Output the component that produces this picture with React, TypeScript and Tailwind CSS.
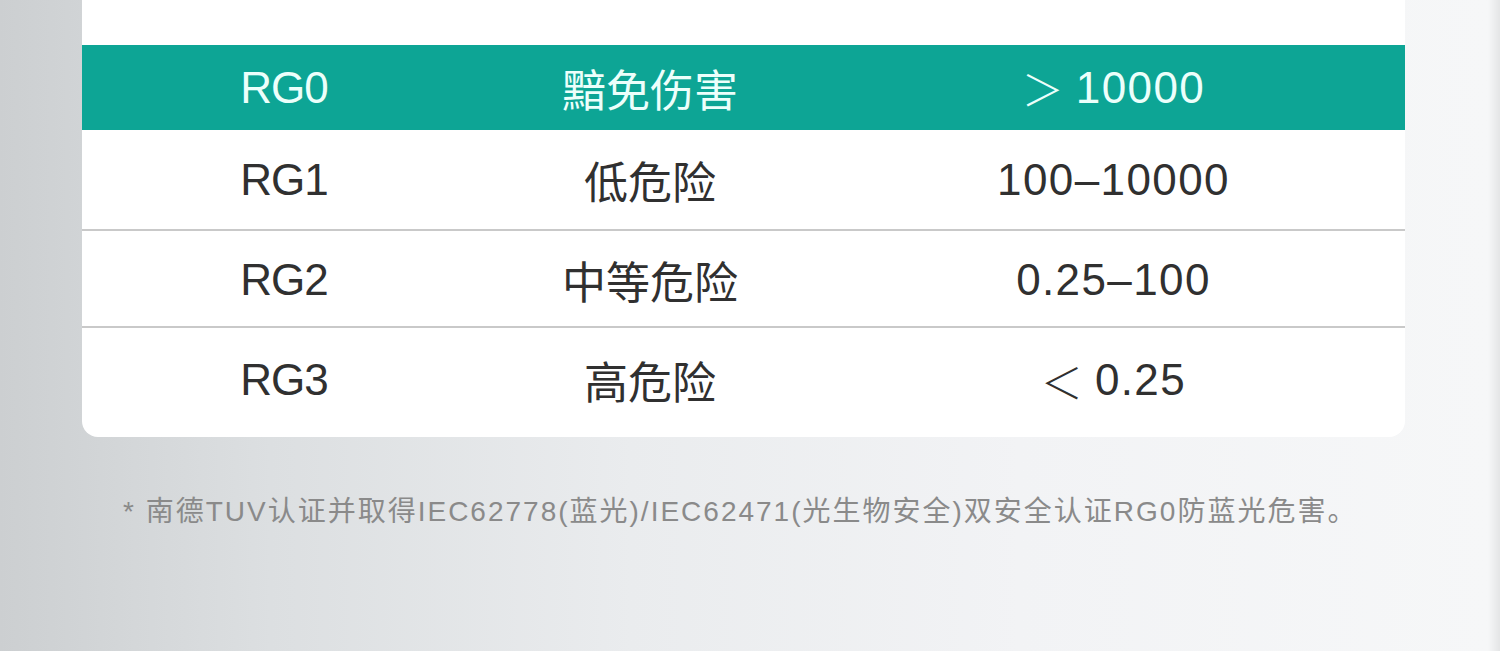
import React from "react";

const latin = "font-['Liberation_Sans','Noto_Sans_CJK_SC',sans-serif]";
const cjk = "font-['Noto_Sans_CJK_SC',sans-serif]";

const rows = [
  { a: "RG1", b: "低危险", c: "100–10000", h: "h-[101px] border-b-2 border-[#c9c9c9]" },
  { a: "RG2", b: "中等危险", c: "0.25–100", h: "h-[97px] pt-[3px] border-b-2 border-[#c9c9c9]" },
  { a: "RG3", b: "高危险", c: "＜0.25", h: "h-[102px] pt-[2px]" },
];

function NumCell({ text }: { text: string }) {
  const sign = text.startsWith("＜") || text.startsWith("＞") ? text[0] : null;
  const rest = sign ? text.slice(1) : text;
  return (
    <div className={`flex justify-center items-center pl-[8px] text-[44px] ${latin}`}>
      {sign && <span className={`${cjk} font-light text-[42px]`}>{sign}</span>}
      <span className={`tracking-[1.4px] ${sign ? "ml-[12px]" : ""}`}>{rest}</span>
    </div>
  );
}

export default function App() {
  return (
    <div className="w-[1500px] h-[651px] overflow-hidden bg-[linear-gradient(90deg,#cccfd1_0%,#dcdfe1_18%,#eaecee_42%,#f2f3f5_68%,#f6f7f8_99.2%,#e4e5e6_100%)] pl-[82px] pr-[95px]">
      <div className="bg-white rounded-b-[16px] pt-[45px] pb-[7px]">
        <div className="grid grid-cols-[404px_328px_1fr] h-[85px] items-center bg-[#0da595] text-[#ecfffb]">
          <div className={`text-center text-[44px] tracking-[-1px] ${latin}`}>RG0</div>
          <div className={`text-center text-[44px] ${cjk}`}>黯免伤害</div>
          <NumCell text="＞10000" />
        </div>
        {rows.map((r) => (
          <div
            key={r.a}
            className={`grid grid-cols-[404px_328px_1fr] items-center text-[#303030] ${r.h}`}
          >
            <div className={`text-center text-[44px] tracking-[-1px] ${latin}`}>{r.a}</div>
            <div className={`text-center text-[44px] ${cjk}`}>{r.b}</div>
            <NumCell text={r.c} />
          </div>
        ))}
      </div>
      <div
        className={`mt-[58px] pl-[41px] text-[28px] leading-[34px] tracking-[2px] text-[#8a8a8a] whitespace-nowrap ${latin}`}
      >
        * 南德TUV认证并取得IEC62778(蓝光)/IEC62471(光生物安全)双安全认证RG0防蓝光危害。
      </div>
    </div>
  );
}
